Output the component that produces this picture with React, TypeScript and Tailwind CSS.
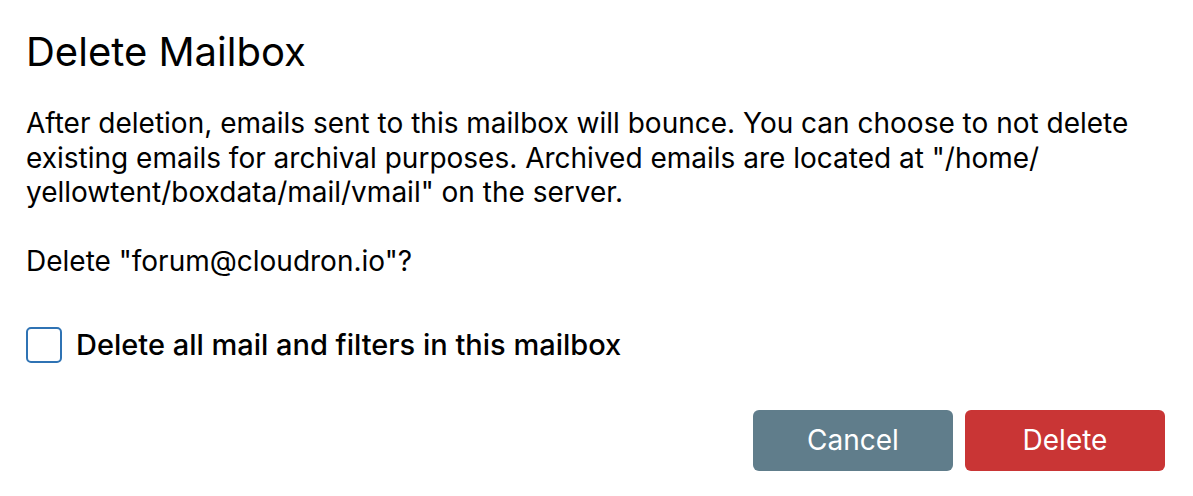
import React, { useState } from "react";

const DeleteMailboxDialog = () => {
  const [purge, setPurge] = useState(false);

  return (
    <div className="w-[1193px] h-[496px] bg-white px-[26px] pt-[24px] font-['Inter','Noto_Sans',sans-serif] text-black">
      <h1 className="text-[40px] leading-[56px] font-normal">Delete Mailbox</h1>

      <div className="mt-[26px] text-[28px] leading-[34.5px]">
        <p>
          After deletion, emails sent to this mailbox will bounce. You can choose to not delete
          existing emails for archival purposes. Archived emails are located at "/home/
          <br />
          yellowtent/boxdata/mail/vmail" on the server.
        </p>
        <p className="mt-[34.5px]">Delete "forum@cloudron.io"?</p>
      </div>

      <label className="mt-[48px] flex items-center gap-[14px] cursor-pointer">
        <input
          type="checkbox"
          checked={purge}
          onChange={(e) => setPurge(e.target.checked)}
          className="peer sr-only"
        />
        <span className="h-[36px] w-[36px] rounded-[5px] border-2 border-[#2f73b4] bg-white" />
        <span className="text-[29px] font-medium leading-[36px]">
          Delete all mail and filters in this mailbox
        </span>
      </label>

      <div className="mt-[47px] flex justify-end gap-[12px] pr-[2px]">
        <button className="h-[61px] w-[200px] rounded-[6px] bg-[#607d8b] text-[28px] text-white">
          Cancel
        </button>
        <button className="h-[61px] w-[200px] rounded-[6px] bg-[#c93535] text-[28px] text-white">
          Delete
        </button>
      </div>
    </div>
  );
};

export default function App() {
  return <DeleteMailboxDialog />;
}
